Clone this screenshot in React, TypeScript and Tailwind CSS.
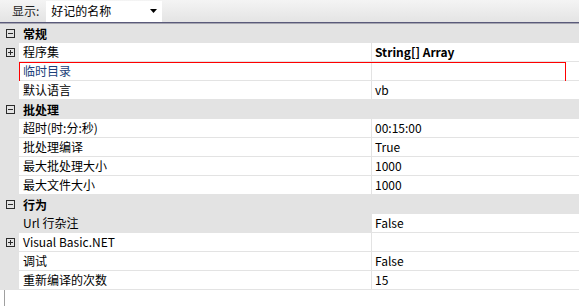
import React from "react";

type Row =
  | { kind: "cat"; label: string }
  | { kind: "prop"; label: string; value?: string; bold?: boolean; plus?: boolean; grayLabel?: boolean; selected?: boolean };

const rows: Row[] = [
  { kind: "cat", label: "常规" },
  { kind: "prop", label: "程序集", value: "String[] Array", bold: true, plus: true },
  { kind: "prop", label: "临时目录", value: "", selected: true },
  { kind: "prop", label: "默认语言", value: "vb" },
  { kind: "cat", label: "批处理" },
  { kind: "prop", label: "超时(时:分:秒)", value: "00:15:00" },
  { kind: "prop", label: "批处理编译", value: "True" },
  { kind: "prop", label: "最大批处理大小", value: "1000" },
  { kind: "prop", label: "最大文件大小", value: "1000" },
  { kind: "cat", label: "行为" },
  { kind: "prop", label: "Url 行杂注", value: "False", grayLabel: true },
  { kind: "prop", label: "Visual Basic.NET", value: "", plus: true },
  { kind: "prop", label: "调试", value: "False" },
  { kind: "prop", label: "重新编译的次数", value: "15" },
];

function BoxIcon({ plus }: { plus: boolean }) {
  return (
    <svg width="9" height="9" viewBox="0 0 9 9" className="block">
      <rect x="0.5" y="0.5" width="8" height="8" fill="none" stroke="#2b2b2b" />
      <line x1="2" y1="4.5" x2="7" y2="4.5" stroke="#2b2b2b" />
      {plus && <line x1="4.5" y1="2" x2="4.5" y2="7" stroke="#2b2b2b" />}
    </svg>
  );
}

export default function App() {
  return (
    <div
      className="w-[579px] h-[306px] bg-white overflow-hidden text-[12px] text-black"
      style={{ fontFamily: '"Noto Sans CJK SC", "Noto Sans", sans-serif' }}
    >
      <div className="h-[22px] bg-gradient-to-b from-[#f4f4f4] to-[#e4e4e4] flex items-center">
        <span className="ml-[12px] text-[#1e1e1e] leading-none">显示:</span>
        <div className="ml-[7px] w-[116px] h-[21px] bg-white flex items-center relative">
          <span className="ml-[5px] leading-none">好记的名称</span>
          <svg width="7" height="4" viewBox="0 0 7 4" className="absolute left-[104px] top-[8px]">
            <polygon points="0,0 7,0 3.5,4" fill="#000" />
          </svg>
        </div>
      </div>
      <div className="h-px bg-[#5a5a7a]" />
      <div className="h-px bg-[#a5a5b0]" />
      <div className="flex flex-col">
        {rows.map((r, i) =>
          r.kind === "cat" ? (
            <div key={i} className="h-[19px] flex bg-[#e3e3e3]">
              <div className="w-[19px] flex items-center justify-center pl-[1px]">
                <BoxIcon plus={false} />
              </div>
              <div className="pl-[4px] flex items-center font-bold leading-none">{r.label}</div>
            </div>
          ) : (
            <div key={i} className="h-[19px] flex relative">
              <div className="w-[19px] bg-[#e3e3e3] flex items-center justify-center pl-[1px]">
                {r.plus && <BoxIcon plus />}
              </div>
              <div
                className={
                  "w-[353px] border-b border-r border-[#e3e3e3] pl-[4px] flex items-center leading-none " +
                  (r.grayLabel ? "bg-[#e3e3e3]" : "bg-white") +
                  (r.selected ? " text-[#1c3f7a]" : "")
                }
              >
                {r.label}
              </div>
              <div className={"flex-1 border-b border-[#e3e3e3] pl-[3px] flex items-center leading-none bg-white " + (r.bold ? "font-bold" : "")}>
                {r.value}
              </div>
              {r.selected && (
                <div className="absolute left-[19px] top-0 w-[547px] h-[20px] border border-[#ff0000] pointer-events-none" />
              )}
            </div>
          )
        )}
      </div>
      <div className="h-[20px] flex">
        <div className="w-[4px]" />
        <div className="w-px bg-[#a0a0a0]" />
      </div>
    </div>
  );
}
